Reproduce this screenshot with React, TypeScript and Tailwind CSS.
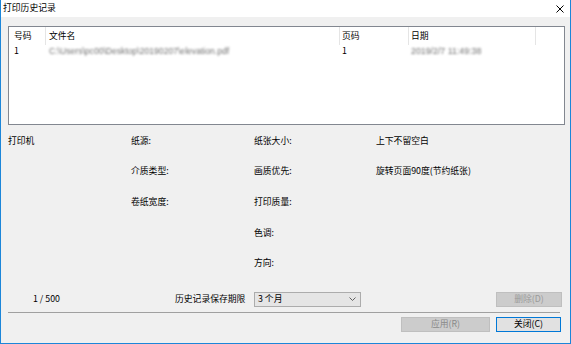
import React from 'react';

const cjk = "font-['Microsoft_YaHei','Noto_Sans_CJK_SC',sans-serif]";

const details: [string, string, string, string][] = [
  ['打印机', '纸源:', '纸张大小:', '上下不留空白'],
  ['', '介质类型:', '画质优先:', '旋转页面90度(节约纸张)'],
  ['', '卷纸宽度:', '打印质量:', ''],
  ['', '', '色调:', ''],
  ['', '', '方向:', ''],
];

const App = () => {
  return (
    <div
      className={`w-[571px] h-[344px] flex flex-col border-x border-b border-[#1c86d9] bg-[#f0f0f0] text-[8.8px] leading-none text-black ${cjk}`}
    >
      {/* Title bar */}
      <div className="h-[17px] flex-none bg-white flex items-center justify-between pl-[2px] pr-[6px]">
        <span>打印历史记录</span>
        <svg width="8" height="8" viewBox="0 0 8 8" className="block">
          <path d="M0.5 0.5 L7.5 7.5 M7.5 0.5 L0.5 7.5" stroke="#000" strokeWidth="1" />
        </svg>
      </div>

      <div className="flex-1 flex flex-col pl-[7px] pr-[5px]">
        {/* History list */}
        <div className="mt-[9px] h-[99px] border border-[#828790] bg-white">
          <div className="h-[18px] flex">
            <div className="w-[37px] flex items-center pl-[5px] border-r border-[#e5e5e5]">号码</div>
            <div className="w-[294px] flex items-center pl-[3px] border-r border-[#e5e5e5]">文件名</div>
            <div className="w-[69px] flex items-center pl-[2px] border-r border-[#e5e5e5]">页码</div>
            <div className="w-[127px] flex items-center pl-[2px] border-r border-[#e5e5e5]">日期</div>
            <div className="flex-1" />
          </div>
          <div className="h-[13px] flex items-center">
            <div className="w-[37px] pl-[5px]">1</div>
            <div className="w-[294px] pl-[3px]">
              <span className="inline-block font-['Liberation_Sans',sans-serif] text-[8.6px] text-[#707070] blur-[0.9px]">
                C:\Users\pc00\Desktop\20190207\elevation.pdf
              </span>
            </div>
            <div className="w-[69px] pl-[2px]">1</div>
            <div className="w-[127px] pl-[2px]">
              <span className="inline-block font-['Liberation_Sans',sans-serif] text-[8.8px] text-[#707070] blur-[0.9px]">
                2019/2/7 11:49:38
              </span>
            </div>
          </div>
        </div>

        {/* Details */}
        <div className="mt-[1px] grid grid-cols-[123px_123px_122px_1fr]">
          {details.map((row, i) =>
            row.map((cell, j) => (
              <div key={`${i}-${j}`} className="h-[30.6px] flex items-center">
                {cell}
              </div>
            ))
          )}
        </div>

        {/* Count / retention / delete */}
        <div className="mt-[13px] h-[15px] flex items-center">
          <div className="w-[167px] pl-[25px]">1 / 500</div>
          <div className="w-[79px]">历史记录保存期限</div>
          <div className="w-[107px] h-[15px] flex items-center justify-between pl-[3px] pr-[4px] bg-[#e5e5e5] border border-[#acacac]">
            <span>3 个月</span>
            <svg width="7" height="4" viewBox="0 0 7 4" className="block">
              <path d="M0.5 0.5 L3.5 3.5 L6.5 0.5" fill="none" stroke="#606060" strokeWidth="1" />
            </svg>
          </div>
          <button className="ml-auto mr-[3px] w-[66px] h-[15px] bg-[#cccccc] border border-[#bfbfbf] text-[#9a9a9a] leading-none">
            删除(D)
          </button>
        </div>

        <div className="mt-[5px] mr-[5px] h-px bg-[#a0a0a0]" />

        {/* Dialog buttons */}
        <div className="mt-[4px] mr-[4px] flex justify-end gap-[6px]">
          <button className="w-[89px] h-[15px] bg-[#cccccc] border border-[#bfbfbf] text-[#8a8a8a] leading-none">
            应用(R)
          </button>
          <button className="w-[65px] h-[15px] bg-[#e1e1e1] border border-[#0078d7] text-black leading-none">
            关闭(C)
          </button>
        </div>
      </div>
    </div>
  );
};

export default App;
